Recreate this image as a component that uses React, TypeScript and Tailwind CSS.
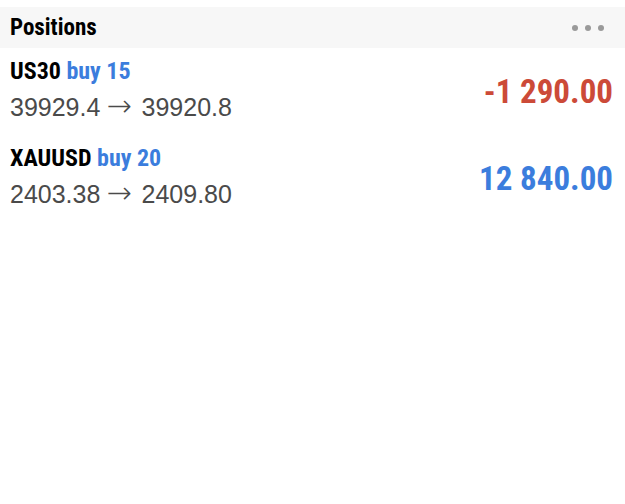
import React from "react";

type Position = {
  symbol: string;
  side: string;
  volume: number;
  open: string;
  current: string;
  profit: string;
};

const positions: Position[] = [
  { symbol: "US30", side: "buy", volume: 15, open: "39929.4", current: "39920.8", profit: "-1 290.00" },
  { symbol: "XAUUSD", side: "buy", volume: 20, open: "2403.38", current: "2409.80", profit: "12 840.00" },
];

const condensed = "font-['Liberation_Sans_Narrow','Roboto_Condensed',Roboto,sans-serif]";

export default function App() {
  return (
    <div className="h-[504px] w-full bg-white pt-[7px]">
      {/* Header */}
      <div className="flex h-[41px] items-center justify-between bg-[#f7f7f7] pl-[10px] pr-[21px]">
        <h1 className={`${condensed} text-[23px] font-bold leading-none text-black`}>Positions</h1>
        <div className="flex gap-[7px]">
          <span className="h-[6px] w-[6px] rounded-full bg-[#9a9a9a]" />
          <span className="h-[6px] w-[6px] rounded-full bg-[#9a9a9a]" />
          <span className="h-[6px] w-[6px] rounded-full bg-[#9a9a9a]" />
        </div>
      </div>

      {/* Rows */}
      {positions.map((p) => {
        const negative = p.profit.startsWith("-");
        return (
          <div key={p.symbol} className="flex h-[87px] items-center justify-between pl-[10px] pr-[12px]">
            <div className="flex flex-col">
              <div className={`${condensed} text-[24px] font-bold leading-[28px]`}>
                <span className="text-black">{p.symbol}</span>{" "}
                <span className="text-[#3b7ddd]">
                  {p.side} {p.volume}
                </span>
              </div>
              <div className="mt-[3px] font-['Liberation_Sans',Arial,sans-serif] text-[25px] leading-[38px] text-[#4a4a4a]">
                {p.open}
                <span className="ml-[6px] mr-[10px] font-['DejaVu_Sans',sans-serif] text-[30px] font-extralight leading-none">→</span>
                {p.current}
              </div>
            </div>
            <div
              className={`${condensed} text-[33px] font-bold ${
                negative ? "text-[#cc4a38]" : "text-[#3b7ddd]"
              }`}
            >
              {p.profit}
            </div>
          </div>
        );
      })}
    </div>
  );
}
